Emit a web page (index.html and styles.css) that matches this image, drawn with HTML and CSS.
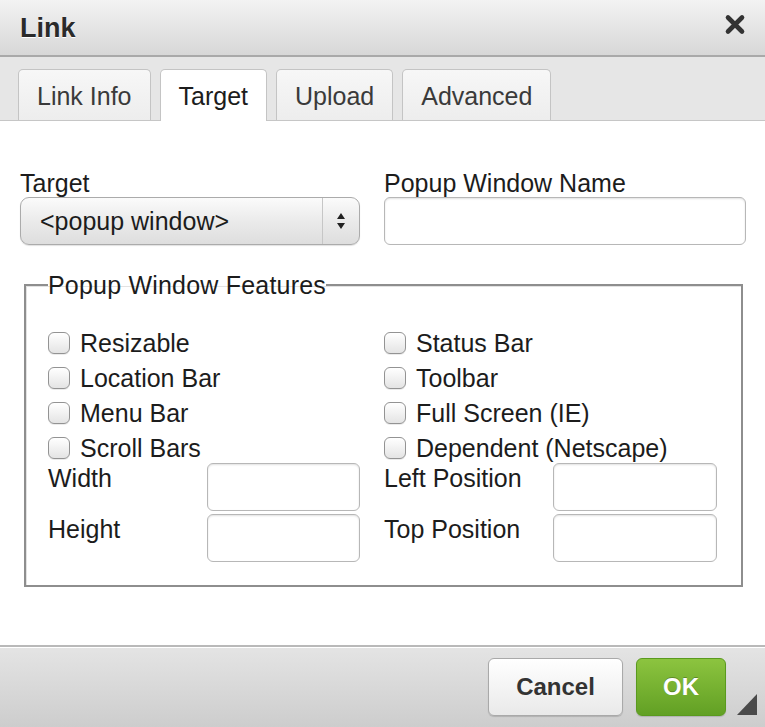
FILE: index.html
```html
<!DOCTYPE html>
<html lang="en">
<head>
<meta charset="UTF-8" />
<title>Link</title>
<link rel="stylesheet" href="styles.css">
</head>
<body>

<div class="dialog">
  <!-- Başlık -->
  <div class="titlebar">
    <span class="title">Link</span>
    <svg class="close" width="22" height="21" viewBox="0 0 22 21">
      <path d="M4 3.5 L18 17.5 M18 3.5 L4 17.5" stroke="#333" stroke-width="4.6" stroke-linecap="round" fill="none"/>
    </svg>
  </div>

  <!-- Sekmeler -->
  <div class="tabs">
    <a class="tab">Link Info</a>
    <a class="tab active">Target</a>
    <a class="tab">Upload</a>
    <a class="tab">Advanced</a>
  </div>

  <div class="content">
    <div class="top-row">
      <div class="field">
        <label>Target</label>
        <div class="select">
          <span class="select-value">&lt;popup window&gt;</span>
          <span class="select-arrows">
            <svg width="10" height="20" viewBox="0 0 10 20">
              <path d="M5 2 L9 8 L1 8 Z M1 12 L9 12 L5 18 Z" fill="#222"/>
            </svg>
          </span>
        </div>
      </div>
      <div class="field">
        <label>Popup Window Name</label>
        <input type="text" class="text-input" />
      </div>
    </div>

    <fieldset class="features">
      <legend>Popup Window Features</legend>
      <div class="checks">
        <label class="check"><input type="checkbox" /><span>Resizable</span></label>
        <label class="check"><input type="checkbox" /><span>Status Bar</span></label>
        <label class="check"><input type="checkbox" /><span>Location Bar</span></label>
        <label class="check"><input type="checkbox" /><span>Toolbar</span></label>
        <label class="check"><input type="checkbox" /><span>Menu Bar</span></label>
        <label class="check"><input type="checkbox" /><span>Full Screen (IE)</span></label>
        <label class="check"><input type="checkbox" /><span>Scroll Bars</span></label>
        <label class="check"><input type="checkbox" /><span>Dependent (Netscape)</span></label>
      </div>
      <div class="sizes">
        <div class="size"><label>Width</label><input type="text" class="text-input small" /></div>
        <div class="size"><label>Left Position</label><input type="text" class="text-input wide" /></div>
        <div class="size"><label>Height</label><input type="text" class="text-input small" /></div>
        <div class="size"><label>Top Position</label><input type="text" class="text-input wide" /></div>
      </div>
    </fieldset>
  </div>

  <!-- Alt butonlar -->
  <div class="footer">
    <button class="btn btn-cancel">Cancel</button>
    <button class="btn btn-ok">OK</button>
    <svg class="grip" width="20" height="21" viewBox="0 0 20 21">
      <polygon points="20,0 20,21 0,21" fill="#4a4a4a"/>
    </svg>
  </div>
</div>

</body>
</html>
```

FILE: styles.css
```css
body {
  margin: 0;
  font-family: "Liberation Sans", Arial, Helvetica, sans-serif;
  color: #1c1c1c;
  background: #fff;
}
.dialog {
  width: 765px;
  height: 727px;
  display: flex;
  flex-direction: column;
  background: #fff;
}
.titlebar {
  height: 55px;
  flex: none;
  display: flex;
  align-items: center;
  justify-content: space-between;
  padding: 0 19px 0 20px;
  background: linear-gradient(#f3f3f3, #d7d7d7);
  border-bottom: 2px solid #a9a9a9;
}
.title {
  font-size: 27px;
  font-weight: bold;
  color: #2a2a2a;
  line-height: 55px;
  padding-top: 1px;
  text-shadow: 0 1px 0 #fff;
}
.close {
  margin-bottom: 7px;
}
.tabs {
  height: 63px;
  flex: none;
  display: flex;
  align-items: flex-end;
  gap: 9px;
  padding-left: 18px;
  background: #e6e6e6;
  border-bottom: 1px solid #c6c6c6;
}
.tab {
  height: 51px;
  line-height: 49px;
  padding: 2px 18px 0;
  box-sizing: border-box;
  font-size: 25px;
  color: #3a3a3a;
  background: linear-gradient(#f7f7f7, #ededed);
  border: 1px solid #c4c4c4;
  border-bottom: none;
  border-radius: 5px 5px 0 0;
}
.tab.active {
  background: #fff;
  color: #1c1c1c;
  height: 52px;
  margin-bottom: -1px;
}
.content {
  flex: 1;
  padding: 48px 19px 0 20px;
}
.top-row {
  display: grid;
  grid-template-columns: 340px 362px;
  column-gap: 24px;
}
.field label {
  display: block;
  font-size: 25px;
  line-height: 28px;
}
.select {
  height: 48px;
  box-sizing: border-box;
  display: flex;
  align-items: center;
  border: 1px solid #ababab;
  border-radius: 9px;
  background: linear-gradient(#fbfbfb, #e9e9e9 55%, #dedede);
  box-shadow: 0 1px 1px rgba(0,0,0,0.12);
}
.select-value {
  flex: 1;
  padding-left: 19px;
  font-size: 25px;
}
.select-arrows {
  width: 36px;
  height: 100%;
  display: flex;
  align-items: center;
  justify-content: center;
  border-left: 1px solid #c6c6c6;
}
.text-input {
  display: block;
  box-sizing: border-box;
  width: 100%;
  height: 48px;
  margin: 0;
  border: 1px solid #b7b7b7;
  border-radius: 6px;
  background: #fff;
  box-shadow: inset 0 1px 2px rgba(0,0,0,0.12);
}
.features {
  margin: 26px 3px 0 4px;
  padding: 27px 22px 23px 22px;
  border: 2px solid #8e8e8e;
  box-shadow: inset 1px 1px 0 #e2e2e2;
}
.features legend {
  padding: 0;
  font-size: 25px;
  line-height: 28px;
  letter-spacing: 0.2px;
}
.checks {
  display: grid;
  grid-template-columns: 312px 333px;
  grid-auto-rows: 34px;
  column-gap: 24px;
  row-gap: 1px;
}
.check {
  display: flex;
  align-items: center;
  gap: 10px;
  font-size: 25px;
  line-height: 34px;
}
.check input {
  appearance: none;
  width: 22px;
  height: 22px;
  margin: 0;
  border: 1px solid #939393;
  border-radius: 6px;
  background: linear-gradient(#ffffff, #e4e4e4);
  box-shadow: 0 1px 0 rgba(0,0,0,0.08);
}
.sizes {
  display: grid;
  grid-template-columns: 312px 333px;
  column-gap: 24px;
  row-gap: 3px;
  margin-top: -2px;
}
.size {
  display: flex;
  align-items: flex-start;
}
.size label {
  flex: 1;
  font-size: 25px;
  line-height: 28px;
  margin-top: 1px;
}
.text-input.small {
  width: 153px;
}
.text-input.wide {
  width: 164px;
}
.footer {
  position: relative;
  height: 82px;
  flex: none;
  box-sizing: border-box;
  display: flex;
  justify-content: flex-end;
  align-items: flex-start;
  gap: 13px;
  padding: 11px 39px 0 0;
  border-top: 2px solid #b9b9b9;
  box-shadow: inset 0 1px 0 #fff;
  background: linear-gradient(#e4e4e4, #cdcdcd);
}
.btn {
  height: 58px;
  border-radius: 6px;
  font-family: "Liberation Sans", Arial, Helvetica, sans-serif;
  font-size: 24px;
  font-weight: bold;
  cursor: pointer;
}
.btn-cancel {
  width: 135px;
  color: #333;
  border: 1px solid #a9a9a9;
  background: linear-gradient(#ffffff, #e9e9e9);
  box-shadow: 0 1px 1px rgba(0,0,0,0.15);
}
.btn-ok {
  width: 90px;
  color: #fff;
  border: 1px solid #5a9a1e;
  background: linear-gradient(#8cc43f, #62a024);
  text-shadow: 0 -1px 0 rgba(0,0,0,0.25);
  box-shadow: 0 1px 1px rgba(0,0,0,0.15);
}
.grip {
  position: absolute;
  right: 8px;
  bottom: 12px;
}
```
